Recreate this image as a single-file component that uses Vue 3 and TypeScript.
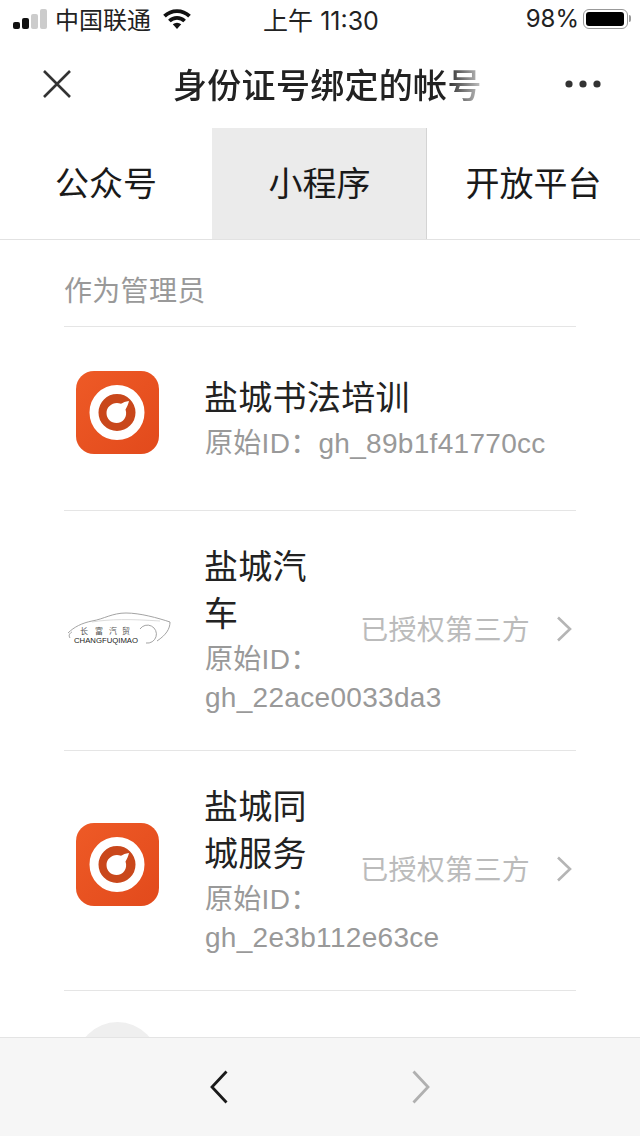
<script setup lang="ts">
interface Row {
  name: string
  id: string
  logo: 'orange' | 'car'
  authorized: boolean
}

const tabs: string[] = ['公众号', '小程序', '开放平台']
const rows: Row[] = [
  { name: '盐城书法培训', id: 'gh_89b1f41770cc', logo: 'orange', authorized: false },
  { name: '盐城汽车', id: 'gh_22ace0033da3', logo: 'car', authorized: true },
  { name: '盐城同城服务', id: 'gh_2e3b112e63ce', logo: 'orange', authorized: true },
]
</script>

<template>
  <div class="page">
    <div class="status">
      <div class="status-left">
        <span class="bars">
          <i class="bar b1"></i><i class="bar b2"></i><i class="bar b3"></i><i class="bar b4"></i>
        </span>
        <span class="carrier">中国联通</span>
        <svg class="wifi" width="28" height="20" viewBox="0 0 28 20">
          <path d="M1.5 7.2A18 18 0 0 1 26.5 7.2" fill="none" stroke="#111" stroke-width="3.8" />
          <path d="M6.4 12A11 11 0 0 1 21.6 12" fill="none" stroke="#111" stroke-width="3.8" />
          <path d="M9.8 15.2a6.4 6.4 0 0 1 8.4 0L14 20z" fill="#111" />
        </svg>
      </div>
      <div class="time">上午 11:30</div>
      <div class="status-right">
        <span>98%</span>
        <span class="battery"><span class="battery-fill"></span></span>
      </div>
    </div>

    <div class="nav">
      <svg class="close" width="30" height="30" viewBox="0 0 30 30">
        <path d="M2 2L28 28M28 2L2 28" stroke="#333" stroke-width="2.6" fill="none" />
      </svg>
      <div class="title">身份证号绑定的帐号</div>
      <svg class="more" width="36" height="8" viewBox="0 0 36 8">
        <circle cx="4" cy="4" r="3.6" fill="#333" />
        <circle cx="18" cy="4" r="3.6" fill="#333" />
        <circle cx="32" cy="4" r="3.6" fill="#333" />
      </svg>
    </div>

    <div class="tabs">
      <div v-for="(tab, i) in tabs" :key="tab" class="tab" :class="{ active: i === 1 }">{{ tab }}</div>
    </div>

    <div class="list">
      <div class="section">作为管理员</div>
      <div v-for="row in rows" :key="row.id" class="row" :class="{ authorized: row.authorized }">
        <div class="logo-cell">
          <svg v-if="row.logo === 'orange'" class="logo-orange" width="83" height="83" viewBox="0 0 83 83">
            <defs>
              <linearGradient :id="'g' + row.id" x1="0" y1="0" x2="1" y2="1">
                <stop offset="0" stop-color="#ee5a26" />
                <stop offset="1" stop-color="#e24a1c" />
              </linearGradient>
            </defs>
            <rect width="83" height="83" rx="18" :fill="'url(#g' + row.id + ')'" />
            <circle cx="41" cy="41.5" r="23" fill="#c9471b" stroke="#fff" stroke-width="9" />
            <path d="M53 30C49.5 30.5 47 31.5 45 32.8C38 30 30.5 35 30.5 42C30.5 48 35 52 40.5 52C47 52 52 46 49.5 38.5C51 36 52.3 33 53 30Z" fill="#fff" />
          </svg>
          <svg v-else class="logo-car" width="112" height="50" viewBox="64 605 112 50">
            <path d="M68 632C74 626 82 622 92 620C104 618 112 612 126 612C140 612 158 617 170 621" fill="none" stroke="#999" stroke-width=".9" />
            <path d="M92 621C110 618 130 618 160 620" fill="none" stroke="#ccc" stroke-width=".7" />
            <path d="M70 637C68 634 70 632 72 631M170 621C170 628 166 634 157 640" fill="none" stroke="#999" stroke-width=".9" />
            <path d="M140 628A9 9 0 1 1 146 642" fill="none" stroke="#999" stroke-width=".9" />
            <text class="car-cn" x="80" y="633">长</text>
            <text class="car-cn" x="95" y="633">富</text>
            <text class="car-cn" x="109" y="633">汽</text>
            <text class="car-cn" x="122" y="633">贸</text>
            <text class="car-en" x="74" y="642" textLength="64" lengthAdjust="spacingAndGlyphs">CHANGFUQIMAO</text>
          </svg>
        </div>
        <div class="info">
          <div class="name">{{ row.name }}</div>
          <div class="id">原始ID：{{ row.id }}</div>
        </div>
        <template v-if="row.authorized">
          <div class="auth">已授权第三方</div>
          <svg class="arrow" width="16" height="26" viewBox="0 0 16 26">
            <path d="M2 1.5L14 13L2 24.5" fill="none" stroke="#b5b5b5" stroke-width="2.6" />
          </svg>
        </template>
      </div>
      <div class="row-peek"><div class="avatar"></div></div>
    </div>

    <div class="toolbar">
      <svg width="18" height="34" viewBox="0 0 18 34">
        <path d="M16.5 1.5L2 17L16.5 32.5" fill="none" stroke="#1a1a1a" stroke-width="2.8" />
      </svg>
      <svg width="18" height="34" viewBox="0 0 18 34">
        <path d="M1.5 1.5L16 17L1.5 32.5" fill="none" stroke="#b0b0b0" stroke-width="2.8" />
      </svg>
    </div>
  </div>
</template>

<style>
html, body { margin: 0; background: #fff; }
</style>

<style scoped>
.page {
  width: 640px;
  height: 1136px;
  display: flex;
  flex-direction: column;
  overflow: hidden;
  background: #fff;
  color: #1a1a1a;
  font-family: "Liberation Sans", "Noto Sans CJK SC", sans-serif;
}
.status {
  height: 44px;
  flex: none;
  box-sizing: border-box;
  display: grid;
  grid-template-columns: 1fr auto 1fr;
  align-items: center;
  padding: 0 11px 7px 13px;
  font-size: 24px;
  color: #222;
}
.status-left { display: flex; align-items: center; }
.bars { display: flex; align-items: flex-end; gap: 2px; height: 20px; width: 34px; }
.bar { display: block; width: 7px; border-radius: 2px; background: #111; }
.b1 { height: 7px; }
.b2 { height: 11px; }
.b3 { height: 15px; background: #ccc; }
.b4 { height: 20px; background: #ccc; }
.carrier { margin-left: 8px; }
.wifi { margin-left: 12px; }
.time { font-size: 25px; font-family: "Inter", "Noto Sans CJK SC", sans-serif; }
.status-right { display: flex; align-items: center; justify-content: flex-end; font-size: 24px; font-family: "Inter", sans-serif; }
.battery {
  position: relative;
  box-sizing: border-box;
  margin-left: 4px;
  margin-right: 1px;
  width: 45px;
  height: 20px;
  padding: 2px;
  border: 1.5px solid #999;
  border-radius: 6px;
  display: flex;
}
.battery::after {
  content: "";
  position: absolute;
  right: -4px;
  top: 5px;
  width: 2px;
  height: 7px;
  background: #999;
  border-radius: 0 2px 2px 0;
}
.battery-fill { flex: 1; background: #000; border-radius: 3px; margin-right: 1px; }
.nav {
  height: 84px;
  flex: none;
  box-sizing: border-box;
  display: flex;
  align-items: center;
  padding: 0 39px 4px 42px;
}
.close { flex: none; }
.title {
  margin-left: 101px;
  margin-right: auto;
  margin-bottom: 2px;
  font-size: 34px;
  font-weight: 500;
  letter-spacing: .3px;
  white-space: nowrap;
  color: #222;
  -webkit-mask-image: linear-gradient(to right, #000 88%, rgba(0, 0, 0, .25) 100%);
  mask-image: linear-gradient(to right, #000 88%, rgba(0, 0, 0, .25) 100%);
}
.more { flex: none; }
.tabs {
  height: 112px;
  flex: none;
  display: grid;
  grid-template-columns: 212px 215px 213px;
  box-sizing: border-box;
  border-bottom: 1px solid #e2e2e2;
}
.tab {
  display: flex;
  align-items: center;
  justify-content: center;
  box-sizing: border-box;
  padding-bottom: 4px;
  font-size: 34px;
  color: #1a1a1a;
}
.tab.active {
  background: #ebebeb;
  box-shadow: inset -1px 0 0 #d4d4d4;
}
.list {
  flex: 1;
  min-height: 0;
  overflow: hidden;
  padding: 0 64px;
}
.section {
  height: 87px;
  box-sizing: border-box;
  padding-top: 32px;
  line-height: 40px;
  font-size: 28px;
  letter-spacing: .3px;
  color: #999;
  border-bottom: 1px solid #e5e5e5;
}
.row {
  box-sizing: border-box;
  min-height: 184px;
  padding: 33px 0;
  display: flex;
  align-items: center;
  border-bottom: 1px solid #e5e5e5;
}
.logo-cell {
  width: 141px;
  flex: none;
  display: flex;
  align-items: center;
}
.logo-orange { margin: 0 0 12px 12px; display: block; }
.logo-car { display: block; }
.car-cn { font-size: 8px; fill: #555; font-family: "Noto Sans CJK SC", sans-serif; }
.car-en { font-size: 8px; fill: #222; font-family: "Liberation Sans", sans-serif; }
.info { flex: 1; min-width: 0; }
.authorized .info { flex: none; width: 116px; }
.name { font-size: 34px; line-height: 47px; letter-spacing: .3px; color: #222; margin-bottom: 3px; margin-left: -1px; }
.id { font-size: 28px; line-height: 38px; color: #999; letter-spacing: .3px; }
.auth {
  margin-left: auto;
  margin-bottom: 5px;
  font-size: 28px;
  letter-spacing: .3px;
  color: #bbb;
  white-space: nowrap;
}
.arrow { flex: none; margin-left: 26px; margin-right: 4px; margin-bottom: 3px; }
.row-peek { padding-top: 31px; padding-left: 12px; }
.avatar { width: 83px; height: 83px; border-radius: 50%; background: #efefef; }
.toolbar {
  height: 99px;
  flex: none;
  box-sizing: border-box;
  background: #f6f6f6;
  border-top: 1px solid #e4e4e4;
  display: flex;
  align-items: center;
  padding-left: 210px;
  gap: 184px;
}
</style>
